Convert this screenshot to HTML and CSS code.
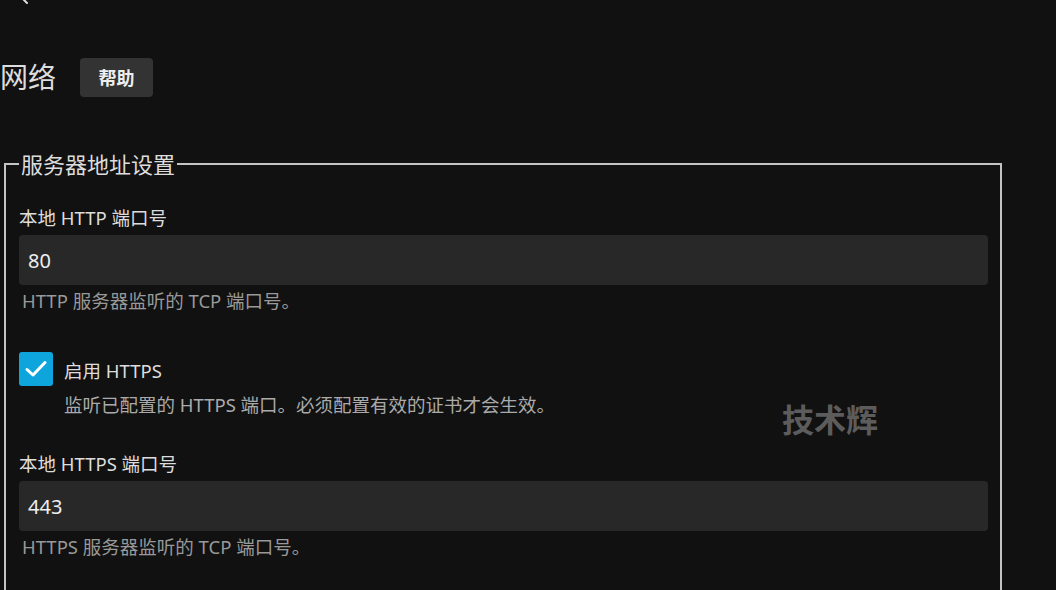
FILE: index.html
```html
<!DOCTYPE html>
<html lang="zh-CN">
    <head>
        <meta charset="UTF-8" />
        <title>网络</title>
        <link rel="stylesheet" href="styles.css">
    </head>
    <body>
        <a class="back" href="#">
            <svg width="24" height="24" viewBox="0 0 24 24"><path d="M15 5 L8 12 L15 19" fill="none" stroke="#ddd" stroke-width="2" stroke-linecap="round"/></svg>
        </a>

        <div class="page-title">
            <h1>网络</h1>
            <button class="help-btn">帮助</button>
        </div>

        <fieldset class="group">
            <legend>服务器地址设置</legend>

            <div class="field">
                <label for="httpPort">本地 HTTP 端口号</label>
                <input type="text" id="httpPort" value="80" />
                <p class="hint">HTTP 服务器监听的 TCP 端口号。</p>
            </div>

            <div class="check-field">
                <span class="checkbox">
                    <svg width="34" height="34" viewBox="0 0 34 34"><path d="M8 17.5 L14 23 L26 10.5" fill="none" stroke="#fff" stroke-width="3" stroke-linecap="round" stroke-linejoin="round"/></svg>
                </span>
                <div class="check-text">
                    <div class="check-label">启用 HTTPS</div>
                    <div class="check-desc">监听已配置的 HTTPS 端口。必须配置有效的证书才会生效。</div>
                </div>
            </div>

            <div class="field">
                <label for="httpsPort">本地 HTTPS 端口号</label>
                <input type="text" id="httpsPort" value="443" />
                <p class="hint">HTTPS 服务器监听的 TCP 端口号。</p>
            </div>
        </fieldset>

        <div class="watermark">技术辉</div>
    </body>
</html>
```

FILE: styles.css
```css
body {
    background-color: #111;
    color: #ddd;
    font-family: "Noto Sans", "Noto Sans CJK SC", sans-serif;
    margin: 0;
    padding: 0;
    height: 590px;
    overflow: hidden;
}
.back {
    display: block;
    width: 24px;
    height: 24px;
    margin: -16px 0 0 12px;
}
/* title row */
.page-title {
    display: flex;
    align-items: center;
    gap: 24px;
    margin-top: 49px;
}
.page-title h1 {
    margin: 0;
    font-size: 28px;
    font-weight: normal;
    line-height: 40px;
    color: #ddd;
}
.help-btn {
    background-color: #333;
    color: #eee;
    border: none;
    border-radius: 4px;
    width: 73px;
    height: 39px;
    font-family: inherit;
    font-size: 18px;
    font-weight: bold;
    cursor: pointer;
}
/* settings group */
.group {
    margin: 53px 0 0 4px;
    width: 998px;
    box-sizing: border-box;
    border: 2px solid #c4c4c4;
    padding: 28px 12px 0 13px;
    min-height: 600px;
}
.group legend {
    font-size: 22px;
    line-height: 28px;
    padding: 0 2px;
    margin-left: 0;
    color: #ddd;
}
.field label {
    display: block;
    font-size: 18.5px;
    line-height: 24px;
    color: #ddd;
    margin-bottom: 5px;
}
.field input {
    display: block;
    width: 100%;
    box-sizing: border-box;
    height: 50px;
    background-color: #282828;
    border: none;
    border-radius: 4px;
    color: #eee;
    font-family: inherit;
    font-size: 20px;
    padding: 0 9px;
}
.hint {
    margin: 4px 0 0;
    padding-left: 3px;
    font-size: 18.5px;
    line-height: 24px;
    color: #999;
}
/* checkbox */
.check-field {
    display: flex;
    gap: 11px;
    margin: 39px 0 35px;
}
.checkbox {
    flex: none;
    width: 34px;
    height: 34px;
    border-radius: 3px;
    background-color: #0ea5dd;
    display: flex;
}
.check-text {
    padding-top: 7px;
}
.check-label {
    font-size: 18.5px;
    line-height: 24px;
    color: #ddd;
}
.check-desc {
    margin-top: 10px;
    font-size: 18.5px;
    line-height: 24px;
    color: #aaa;
}
.watermark {
    position: absolute;
    left: 782px;
    top: 395px;
    font-size: 32px;
    font-weight: bold;
    color: #5c5c5c;
}
```
